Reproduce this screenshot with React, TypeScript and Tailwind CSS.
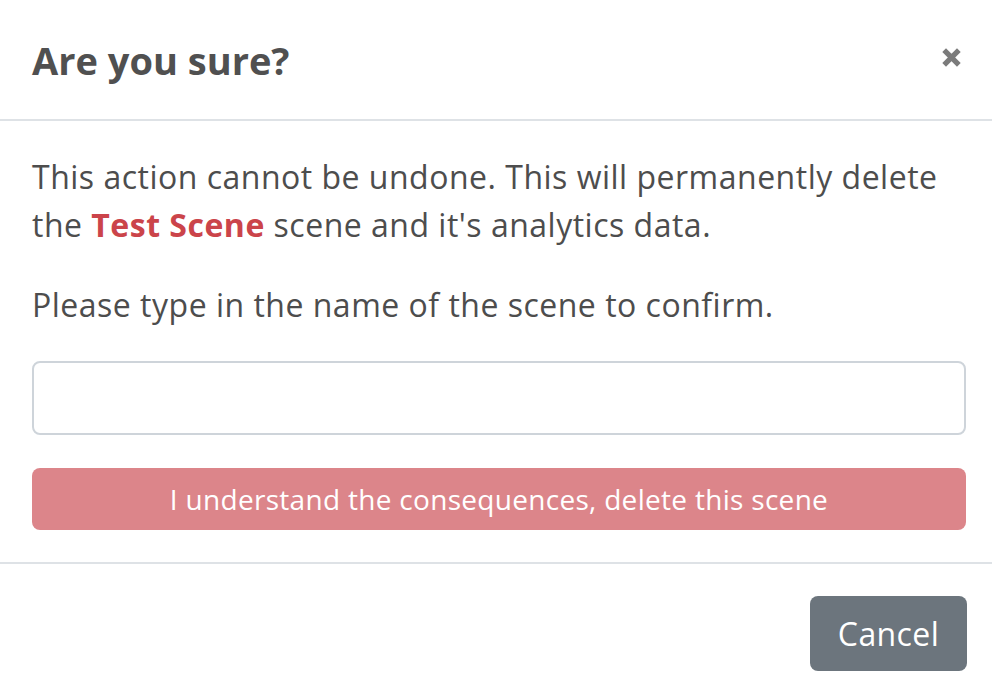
export default function App() {
  return (
    <div className="w-[992px] h-[692px] bg-white text-[#4d4d4d] font-['Open_Sans',sans-serif]">
      <div className="h-[121px] flex items-center justify-between pl-8 pr-[29px] border-b-2 border-[#dee2e6]">
        <h5 className="text-[38px] font-bold text-[#505050] leading-none">Are you sure?</h5>
        <button className="w-6 h-6 flex items-center justify-center mt-[-4px]">
          <svg width="21" height="21" viewBox="0 0 20 20">
            <path d="M3 3 L17 17 M17 3 L3 17" stroke="#7b7b7b" strokeWidth="5" strokeLinecap="butt" />
          </svg>
        </button>
      </div>
      <div className="pl-8 pr-[26px] pt-8 pb-8">
        <p className="text-[32px] leading-[48px] tracking-[0.5px] mb-8">
          This action cannot be undone. This will permanently delete the{' '}
          <span className="font-bold text-[#cb444a]">Test Scene</span> scene and it's analytics data.
        </p>
        <p className="text-[32px] leading-[48px] tracking-[0.5px] mb-8">Please type in the name of the scene to confirm.</p>
        <input className="block w-full h-[74px] border-2 border-[#ced4da] rounded-lg px-6 text-[32px] outline-none" />
        <button className="mt-[33px] w-full h-[62px] rounded-lg bg-[#dc858a] text-white text-[28px] tracking-[0.3px] flex items-center justify-center">
          I understand the consequences, delete this scene
        </button>
      </div>
      <div className="border-t-2 border-[#dee2e6] flex justify-end pt-8 pr-[25px]">
        <button className="w-[157px] h-[75px] rounded-lg bg-[#6c757d] text-white text-[32px] tracking-[0.4px]">Cancel</button>
      </div>
    </div>
  );
}
